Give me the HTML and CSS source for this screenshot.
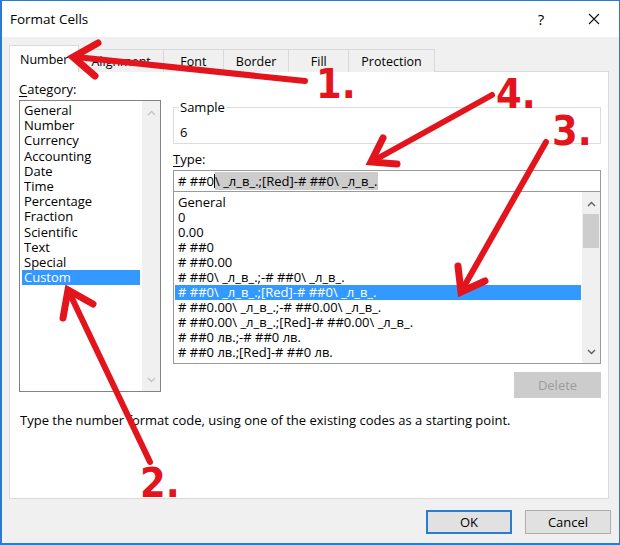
FILE: index.html
```html
<!DOCTYPE html>
<html lang="en">
<head>
  <meta charset="UTF-8" />
  <title>Format Cells</title>
  <link rel="stylesheet" href="styles.css">
</head>
<body>
  <div class="window">
    <div class="titlebar">
      <span class="title">Format Cells</span>
      <span class="help">?</span>
      <span class="close">
        <svg width="12" height="12" viewBox="0 0 12 12"><path d="M1 1L11 11M11 1L1 11" stroke="#111" stroke-width="1.1" fill="none"/></svg>
      </span>
    </div>

    <div class="tabs">
      <div class="tab active">Number</div>
      <div class="tab">Alignment</div>
      <div class="tab">Font</div>
      <div class="tab">Border</div>
      <div class="tab">Fill</div>
      <div class="tab">Protection</div>
    </div>

    <div class="panel">
      <div class="columns">
        <div class="category">
          <div class="label"><u>C</u>ategory:</div>
          <div class="listbox cat-list">
            <ul class="items">
              <li>General</li>
              <li>Number</li>
              <li>Currency</li>
              <li>Accounting</li>
              <li>Date</li>
              <li>Time</li>
              <li>Percentage</li>
              <li>Fraction</li>
              <li>Scientific</li>
              <li>Text</li>
              <li>Special</li>
              <li class="selected">Custom</li>
            </ul>
            <div class="scrollbar off">
              <svg class="chev" width="9" height="6" viewBox="0 0 9 6"><polyline points="1,5 4.5,1.5 8,5"/></svg>
              <svg class="chev" width="9" height="6" viewBox="0 0 9 6"><polyline points="1,1 4.5,4.5 8,1"/></svg>
            </div>
          </div>
        </div>

        <div class="format">
          <fieldset class="sample">
            <legend>Sample</legend>
            <div class="sample-value">6</div>
          </fieldset>

          <div class="label type-label"><u>T</u>ype:</div>
          <div class="type-input">
            # ##0<span class="caret"></span><span class="picked">\ _л_в_.;[Red]-# ##0\ _л_в_.</span>
          </div>

          <div class="listbox type-list">
            <ul class="items">
              <li>General</li>
              <li>0</li>
              <li>0.00</li>
              <li># ##0</li>
              <li># ##0.00</li>
              <li># ##0\ _л_в_.;-# ##0\ _л_в_.</li>
              <li class="selected"># ##0\ _л_в_.;[Red]-# ##0\ _л_в_.</li>
              <li># ##0.00\ _л_в_.;-# ##0.00\ _л_в_.</li>
              <li># ##0.00\ _л_в_.;[Red]-# ##0.00\ _л_в_.</li>
              <li># ##0 лв.;-# ##0 лв.</li>
              <li># ##0 лв.;[Red]-# ##0 лв.</li>
            </ul>
            <div class="scrollbar">
              <svg class="chev" width="9" height="6" viewBox="0 0 9 6"><polyline points="1,5 4.5,1.5 8,5"/></svg>
              <div class="track"><div class="thumb"></div></div>
              <svg class="chev" width="9" height="6" viewBox="0 0 9 6"><polyline points="1,1 4.5,4.5 8,1"/></svg>
            </div>
          </div>

          <div class="delete-row">
            <button class="btn disabled">Delete</button>
          </div>
        </div>
      </div>

      <p class="hint">Type the number format code, using one of the existing codes as a starting point.</p>
    </div>

    <div class="actions">
      <button class="btn default">OK</button>
      <button class="btn">Cancel</button>
    </div>
  </div>

  <!-- red hand-drawn callouts on top of the dialog -->
  <svg class="callouts" width="620" height="545" viewBox="0 0 620 545">
    <g class="shaft">
      <line x1="76" y1="57" x2="305" y2="81"/>
      <line x1="69" y1="292" x2="150" y2="462"/>
      <line x1="462" y1="290" x2="546" y2="142"/>
      <line x1="373" y1="161" x2="492" y2="95"/>
    </g>
    <g class="head">
      <polyline points="98,43 73,57 95,76"/>
      <polyline points="63,318 68,290 93,304"/>
      <polyline points="458,266 461,292 485,281"/>
      <polyline points="383,138 371,162 397,164"/>
    </g>
    <text x="316" y="98">1.</text>
    <text x="140" y="497">2.</text>
    <text x="552" y="145">3.</text>
    <text x="496" y="108">4.</text>
  </svg>
</body>
</html>
```

FILE: styles.css
```css
body {
  margin: 0;
  font-family: "Open Sans", "Noto Sans", sans-serif;
  font-size: 13px;
  color: #000;
  background: #fff;
  position: relative;
}

ul {
  list-style: none;
  margin: 0;
  padding: 0;
}

.window {
  width: 620px;
  height: 545px;
  box-sizing: border-box;
  border: 1px solid #2b7bd3;
  border-left-width: 2px;
  border-bottom-width: 2px;
  background: #f0f0f0;
  display: flex;
  flex-direction: column;
}

/* title bar */
.titlebar {
  height: 36px;
  flex: none;
  background: #fff;
  display: flex;
  align-items: center;
  padding-left: 8px;
  padding-right: 2px;
}

.title {
  flex: 1;
  font-size: 13.5px;
}

.help {
  width: 30px;
  text-align: center;
  font-size: 15px;
  margin-right: 15px;
}

.close {
  width: 46px;
  display: flex;
  justify-content: center;
}

/* tab strip */
.tabs {
  display: flex;
  align-items: flex-end;
  height: 27px;
  margin: 8px 0 -1px 7px;
  position: relative;
  z-index: 1;
  font-size: 12.5px;
}

.tab {
  height: 23px;
  line-height: 23px;
  min-width: 61px;
  padding: 0 12px;
  text-align: center;
  border: 1px solid #d9d9d9;
  border-bottom: none;
  margin-left: -1px;
  background: #f0f0f0;
  box-sizing: border-box;
}

.tab:first-child {
  margin-left: 0;
}

.tab.active {
  height: 27px;
  line-height: 28px;
  background: #fff;
  padding: 0 10px;
}

/* main tab page */
.panel {
  height: 428px;
  box-sizing: border-box;
  margin: 0 10px 0 7px;
  border: 1px solid #d9d9d9;
  background: #fff;
  padding: 8px 7px 0 9px;
}

.columns {
  display: flex;
  gap: 12px;
}

.label {
  height: 18px;
  line-height: 18px;
}

.label u {
  text-decoration-thickness: 1px;
  text-underline-offset: 2px;
}

.category {
  width: 142px;
}

.listbox {
  border: 1px solid #828282;
  display: flex;
  background: #fff;
  box-sizing: border-box;
}

.listbox .items {
  flex: 1;
  line-height: 15.2px;
  white-space: nowrap;
  overflow: hidden;
}

.listbox li {
  padding-left: 2px;
}

.listbox li.selected {
  background: #3399ff;
  color: #fff;
}

.cat-list {
  height: 292px;
  margin-top: 2px;
}

.cat-list .items {
  padding: 2px 2px 0 2px;
}

.scrollbar {
  width: 18px;
  background: #f0f0f0;
  display: flex;
  flex-direction: column;
  align-items: center;
  justify-content: space-between;
  padding: 9px 0 8px;
  box-sizing: border-box;
}

.chev {
  flex: none;
}

.chev polyline {
  fill: none;
  stroke: #606060;
  stroke-width: 1.4;
}

.scrollbar.off .chev polyline {
  stroke: #c4c4c4;
}

.scrollbar .track {
  flex: 1;
  width: 100%;
  padding-top: 7px;
}

.scrollbar .thumb {
  height: 34px;
  margin: 0 1px;
  background: #cdcdcd;
}

.format {
  flex: 1;
  padding-top: 20px;
}

.sample {
  margin: 0;
  padding: 0 6px 4px;
  border: 1px solid #dcdcdc;
  height: 44px;
  box-sizing: border-box;
}

.sample legend {
  padding: 0 1px;
  margin-left: -1px;
  line-height: 14px;
}

.sample-value {
  line-height: 16px;
  padding-top: 10px;
}

.type-label {
  margin-top: 6px;
}

.type-input {
  margin-top: 2px;
  height: 22px;
  box-sizing: border-box;
  border: 1px solid #9a9a9a;
  padding-left: 4px;
  line-height: 20px;
  white-space: nowrap;
}

.type-input .picked {
  background: #cccccc;
}

.type-input .caret {
  display: inline-block;
  width: 1px;
  height: 14px;
  background: #000;
  vertical-align: -2px;
}

.type-list {
  height: 172px;
  border-top: none;
  border-color: #9a9a9a;
}

.type-list .items {
  padding: 3px 1px 0;
  line-height: 15px;
}

.type-list li {
  padding-left: 3px;
}

.delete-row {
  display: flex;
  justify-content: flex-end;
  margin-top: 8px;
}

.hint {
  margin: 13px 0 0 1px;
}

/* push buttons */
.btn {
  font: inherit;
  color: #000;
  height: 24px;
  background: #e1e1e1;
  border: 1px solid #adadad;
  padding: 0;
}

.btn.disabled {
  width: 87px;
  height: 26px;
  background: #cccccc;
  border-color: #cccccc;
  color: #9c9c9c;
}

.btn.default {
  border: 2px solid #2b7bd3;
}

.actions {
  display: flex;
  justify-content: flex-end;
  gap: 13px;
  margin: 11px 8px 0 0;
}

.actions .btn {
  width: 86px;
}

/* annotation layer sits above the tab strip */
.callouts {
  position: absolute;
  left: 0;
  top: 0;
  z-index: 2;
  pointer-events: none;
}

.callouts line,
.callouts polyline {
  fill: none;
  stroke: #e3141c;
  stroke-width: 6;
  stroke-linecap: round;
  stroke-linejoin: miter;
}

.callouts .head polyline {
  stroke-width: 7;
}

.callouts text {
  font-family: "Liberation Sans Narrow", "DejaVu Sans Condensed", sans-serif;
  font-weight: bold;
  font-size: 41px;
  fill: #e3141c;
}
```
